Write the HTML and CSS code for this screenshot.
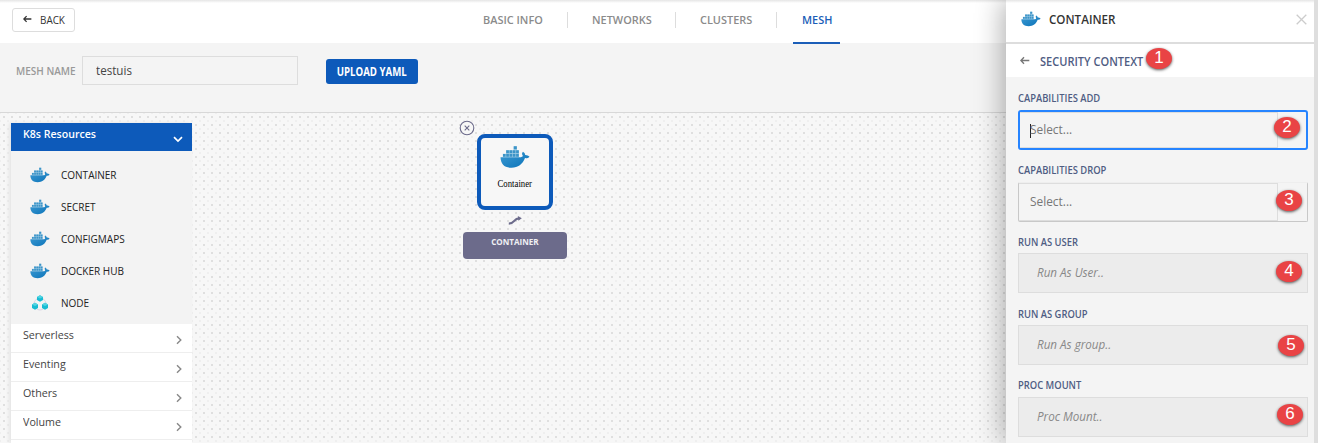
FILE: index.html
```html
<!DOCTYPE html>
<html lang="en">
<head>
<meta charset="utf-8">
<title>Mesh</title>
<link rel="stylesheet" href="styles.css">
</head>
<body>
<svg width="0" height="0" class="defs">
  <defs>
    <linearGradient id="hull" x1="0" y1="0" x2="1" y2="1"><stop offset="0" stop-color="#3d9bd3"/><stop offset="1" stop-color="#0a72b8"/></linearGradient>
    <symbol id="whale" viewBox="0 0 30 22">
      <path fill="#a5cfe6" d="M2.8 7.8h3.2V4.2h7.5V.2h3.4V4.2h2.1v6.8H2.8z"/>
      <path fill="url(#hull)" d="M.5 11.3H19.5C22 11.3 23 10.6 22.7 9.4C21.7 8.3 21.8 6.8 23 5.8C24.4 6.6 25 7.6 25.2 8.9C26.8 8.8 28.4 9.6 29.5 10.7C28.3 12 26.7 12.3 25 12.1C22.5 18.5 18 21.7 11.5 21.7C4.5 21.7 .8 18.5 .5 11.3Z"/>
      <path fill="#3c94c8" d="M3 7.9h2.6v2.8H3zM6.2 7.9h2.7v2.8H6.2zM9.5 7.9h2.7v2.8H9.5zM12.8 7.9h2.7v2.8h-2.7zM16.1 7.9h2.7v2.8h-2.7zM6.2 4.3h2.7v2.9H6.2zM9.5 4.3h2.7v2.9H9.5zM12.8 4.3h2.7v2.9h-2.7zM13.8.3h3v3h-3zM16.1 4.3h2.7v2.9h-2.7z"/>
    </symbol>
    <symbol id="arrow" viewBox="0 0 10 8"><path d="M9.3 4H1M4 .8L.9 4L4 7.2" fill="none" stroke="currentColor" stroke-width="1.4"/></symbol>
    <symbol id="chevron" viewBox="0 0 6 10"><path d="M1 1.2L4.8 5L1 8.8" fill="none" stroke="currentColor" stroke-width="1.4"/></symbol>
  </defs>
</svg>
<div class="app">
  <header class="topbar">
    <button class="back"><svg width="9" height="8"><use href="#arrow"/></svg><span>BACK</span></button>
    <nav class="tabs">
      <a class="tab tab-info"><span>BASIC INFO</span></a>
      <a class="tab tab-net"><span>NETWORKS</span></a>
      <a class="tab tab-clu"><span>CLUSTERS</span></a>
      <a class="tab tab-mesh"><span>MESH</span></a>
    </nav>
  </header>
  <section class="toolbar">
    <label class="mesh-label"><span>MESH NAME</span></label>
    <div class="mesh-input"><span>testuis</span></div>
    <button class="upload"><span>UPLOAD YAML</span></button>
  </section>
  <main class="workspace">
    <aside class="sidebar">
      <div class="group-head"><span>K8s Resources</span><svg class="down" width="10" height="7" viewBox="0 0 10 7"><path d="M1 1.2L5 5L9 1.2" fill="none" stroke="#fff" stroke-width="1.7"/></svg></div>
      <ul class="resources">
        <li><svg width="20" height="16"><use href="#whale"/></svg><span>CONTAINER</span></li>
        <li><svg width="20" height="16"><use href="#whale"/></svg><span>SECRET</span></li>
        <li><svg width="20" height="16"><use href="#whale"/></svg><span>CONFIGMAPS</span></li>
        <li><svg width="20" height="16"><use href="#whale"/></svg><span>DOCKER HUB</span></li>
        <li><svg width="20" height="16" viewBox="0 0 20 16"><circle cx="10" cy="9" r="6" fill="none" stroke="#d9d4e4"/><path fill="#18bcd3" d="M10 .3l3 1.6v3.2l-3 1.6l-3-1.6V1.9zM5 7.8l3 1.6v3.6l-3 1.7l-3-1.7v-3.6zM15 7.8l3 1.6v3.6l-3 1.7l-3-1.7v-3.6z"/><path fill="#54d4e2" d="M10 .3l3 1.6l-3 1.6l-3-1.6zM5 7.8l3 1.6l-3 1.6l-3-1.6zM15 7.8l3 1.6l-3 1.6l-3-1.6z"/></svg><span>NODE</span></li>
      </ul>
      <ul class="groups">
        <li><span>Serverless</span><svg width="6" height="10"><use href="#chevron"/></svg></li>
        <li><span>Eventing</span><svg width="6" height="10"><use href="#chevron"/></svg></li>
        <li><span>Others</span><svg width="6" height="10"><use href="#chevron"/></svg></li>
        <li><span>Volume</span><svg width="6" height="10"><use href="#chevron"/></svg></li>
        <li></li>
      </ul>
    </aside>
    <div class="node">
      <svg class="remove" width="16" height="16" viewBox="0 0 16 16"><circle cx="8" cy="8" r="6.8" fill="#f7f7f7" stroke="#6c6b8b" stroke-width="1.1"/><path d="M5.7 5.7l4.6 4.6M10.3 5.7l-4.6 4.6" stroke="#6c6b8b" stroke-width="1.1"/></svg>
      <div class="node-box"><svg width="30" height="22"><use href="#whale"/></svg><span>Container</span></div>
      <svg class="link" width="14" height="9" viewBox="0 0 14 9"><path d="M.8 7.6C7 7.6 5.5 2.5 11 2.3" fill="none" stroke="#6c6b8b" stroke-width="2.2"/><path d="M9.8 0L13.8 2.2L10.4 4.8z" fill="#6c6b8b"/></svg>
      <div class="node-label"><span>CONTAINER</span></div>
    </div>
  </main>
  <aside class="panel">
    <header class="panel-head"><svg width="20" height="16"><use href="#whale"/></svg><span>CONTAINER</span><svg class="x" width="11" height="11" viewBox="0 0 11 11"><path d="M.7.7l9.6 9.6M10.3.7L.7 10.3" stroke="#ccc" stroke-width="1.3"/></svg></header>
    <div class="panel-sub"><svg width="10" height="9"><use href="#arrow"/></svg><span>SECURITY CONTEXT</span><b class="pin pin-1">1</b></div>
    <div class="form">
      <div class="row"><label><span>CAPABILITIES ADD</span></label><div class="select focus"><div class="value"><i class="caret"></i><span>Select...</span></div></div><b class="pin pin-2">2</b></div>
      <div class="row"><label><span>CAPABILITIES DROP</span></label><div class="select"><div class="value"><span>Select...</span></div></div><b class="pin pin-3">3</b></div>
      <div class="row"><label><span>RUN AS USER</span></label><div class="input"><span>Run As User..</span></div><b class="pin pin-4">4</b></div>
      <div class="row"><label><span>RUN AS GROUP</span></label><div class="input"><span>Run As group..</span></div><b class="pin pin-5">5</b></div>
      <div class="row"><label class="last"><span>PROC MOUNT</span></label><div class="input"><span>Proc Mount..</span></div><b class="pin pin-6">6</b></div>
    </div>
  </aside>
</div>
</body>
</html>
```
FILE: styles.css
```css
* { box-sizing: border-box; }
body { margin: 0; font-family: "Open Sans", "Noto Sans", sans-serif; font-size: 12px; color: #333; }
ul { list-style: none; margin: 0; padding: 0; }
button { font: inherit; }
svg { display: block; flex: none; }
/* Slightly condensed lettering, set per component through --narrow */
span { display: inline-block; white-space: nowrap; transform: scaleX(var(--narrow, .92)); transform-origin: left center; }
.defs { position: absolute; }
.app { position: relative; width: 1318px; height: 443px; overflow: hidden; background: #f4f4f4; }
.topbar { height: 43px; display: flex; background: linear-gradient(#e5e5e5, #fff 3px); }
.back { margin: 8px 0 0 12px; width: 63px; height: 24px; padding: 0 0 2px 10px; display: flex; align-items: center; gap: 8px; background: #fff; border: 1px solid #ddd; border-radius: 3px; color: #333; font-size: 11.5px; --narrow: .86; }
.tabs { display: flex; margin-left: 384px; height: 44px; color: #8b8b8b; font-weight: 600; font-size: 11.5px; --narrow: .95; }
.tab { position: relative; height: 44px; line-height: 40px; padding-left: 24px; }
.tab::after { content: ""; position: absolute; right: 0; top: 12px; height: 16px; border-right: 1px solid #ddd; }
.tab-info { width: 109px; }
.tab-net { width: 108px; }
.tab-clu { width: 101px; }
.tab-mesh { width: 47px; margin-left: 16px; padding-left: 9px; color: #1b5eb8; border-bottom: 2px solid #1b5eb8; }
.tab-mesh::after { display: none; }
.toolbar { height: 70px; display: flex; border-bottom: 1px solid #d8d8d8; padding: 13px 0 0 16px; }
.mesh-label { width: 66px; line-height: 30px; font-weight: 600; color: #999; font-size: 11.5px; --narrow: .87; }
.mesh-input { width: 216px; height: 29px; border: 1px solid #ddd; line-height: 27px; padding-left: 13px; font-size: 12.5px; --narrow: .93; color: #444; }
.upload { display: flex; align-items: center; justify-content: center; margin: 3px 0 0 28px; width: 92px; height: 25px; border: 0; border-radius: 3px; padding: 0 0 1px; background: #0d5aba; color: #fff; font-weight: 700; font-size: 11.5px; --narrow: .84; }
.upload span, .node-label span { transform-origin: center; }
.workspace { position: relative; height: 330px; display: flex; background-color: #f7f7f7; background-image: radial-gradient(circle at 1px 1px, #d2d2d2 .6px, transparent .9px), radial-gradient(circle at 1px 1px, #ebebeb .6px, transparent .9px); background-size: 8px 8px; background-position: 3px 3px, 7px 7px; }
.sidebar { width: 181px; margin: 10px 0 0 11px; background: #f3f3f3; box-shadow: -2px 0 4px rgba(0,0,0,.08); }
.group-head { height: 28px; background: #0d5aba; color: #fff; font-weight: 600; font-size: 11.5px; display: flex; justify-content: space-between; padding: 0 9px 0 12px; line-height: 22px; }
.down { margin-top: 13px; }
.resources { height: 173px; padding-top: 8px; color: #222; font-size: 11.5px; --narrow: .87; }
.resources li { height: 32px; display: flex; align-items: center; gap: 11px; padding-left: 19px; }
.resources span { margin-top: -1px; }
.groups { font-size: 11.5px; --narrow: .93; }
.groups li { height: 29px; background: #fff; border-bottom: 1px solid #eee; display: flex; justify-content: space-between; padding: 0 10px 0 12px; line-height: 22px; color: #444; }
.groups svg { margin-top: 11px; color: #888; }
.node { position: absolute; left: 463px; top: 8px; width: 104px; display: flex; flex-direction: column; align-items: center; }
.remove { position: absolute; left: -4px; top: -1px; }
.node-box { margin-top: 13px; width: 76px; height: 76px; border: 4px solid #0d5aba; border-radius: 8px; background: #f7f7f7; display: flex; flex-direction: column; align-items: center; padding-top: 8px; }
.node-box span { margin-top: 10px; font: 9.5px/12px "Liberation Serif", serif; color: #000; transform-origin: center; }
.link { margin-top: 6px; }
.node-label { margin-top: 7px; width: 104px; height: 27px; border-radius: 4px; background: #6c6b8b; color: #f0f0f4; font-weight: 700; font-size: 9.5px; line-height: 19px; text-align: center; --narrow: .85; }
.panel { position: absolute; left: 1006px; top: 0; width: 312px; height: 443px; background: #f4f4f4; border-right: 4px solid #dedede; box-shadow: -3px 0 26px rgba(0,0,0,.32); }
.panel-head { height: 44px; display: flex; align-items: center; padding: 0 7px 4px 15px; border-bottom: 2px solid #ddd; background: linear-gradient(#e5e5e5, #fff 3px); font-weight: 600; font-size: 12.5px; --narrow: .93; }
.panel-head span { margin-left: 8px; }
.x { margin-left: auto; }
.panel-sub { position: relative; height: 33px; display: flex; align-items: center; background: #fff; padding-left: 14px; gap: 10px; color: #4f5d83; font-weight: 600; font-size: 12px; --narrow: .92; }
.panel-sub span { margin-top: 1px; }
.panel-sub svg { color: #777; }
.form { padding: 13px 6px 0 12px; }
.row { position: relative; height: 72px; }
.row label { display: block; height: 20px; line-height: 16px; font-weight: 600; font-size: 10px; --narrow: .94; color: #4f5d83; }
.row .last { line-height: 15px; }
.select { height: 40px; border: 1px solid #c8c8c8; border-top-color: #eee; border-radius: 2px; }
.select.focus { border: 2px solid #2684ff; border-radius: 3px; }
.value { position: relative; height: 38px; width: 259px; border: 1px solid #ddd; border-left: 0; line-height: 36px; padding-left: 11px; font-size: 12.5px; --narrow: .95; color: #777; }
.focus .value { height: 36px; width: 258px; padding-left: 10px; line-height: 34px; }
.caret { position: absolute; left: 10px; top: 11px; height: 14px; border-left: 1px solid #222; }
.input { margin-top: -1px; height: 40px; border: 1px solid #ddd; background: #ececec; line-height: 38px; padding-left: 18px; font-size: 12px; --narrow: .97; font-style: italic; color: #888; }
.pin { position: absolute; width: 26px; height: 21px; border-radius: 50%; background: #e94345; color: #fff; font: 17px/20px "Liberation Sans", sans-serif; text-align: center; box-shadow: 0 1px 3px rgba(0,0,0,.65); }
.pin-1 { left: 140px; top: 4px; }
.pin-2 { left: 256px; top: 27px; }
.pin-3 { left: 258px; top: 28px; }
.pin-4 { left: 258px; top: 27px; }
.pin-5 { left: 260px; top: 29px; }
.pin-6 { left: 259px; top: 26px; }
```
